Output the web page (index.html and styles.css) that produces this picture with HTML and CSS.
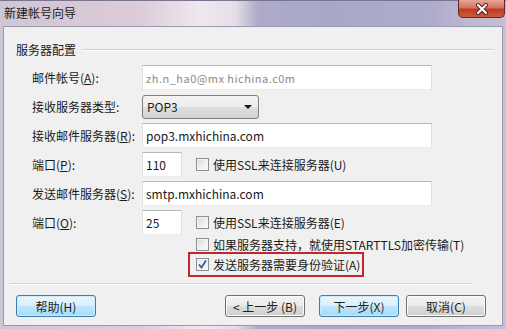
FILE: index.html
```html
<!DOCTYPE html>
<html lang="zh-CN">
<head>
<meta charset="utf-8">
<title>新建帐号向导</title>
<link rel="stylesheet" href="styles.css">
</head>
<body>
<div class="window">
  <div class="titlebar">
    <span class="title">新建帐号向导</span>
    <div class="close">
      <svg width="14" height="12" viewBox="0 0 14 12">
        <path d="M3 2 L11 10 M11 2 L3 10" stroke="#4a2020" stroke-width="4" stroke-linecap="round"/>
        <path d="M3 2 L11 10 M11 2 L3 10" stroke="#ffffff" stroke-width="2.2" stroke-linecap="round"/>
      </svg>
    </div>
  </div>
  <div class="client">
    <div class="group-head"><span class="group-title">服务器配置</span><span class="rule"></span></div>
    <div class="form">
      <div class="row">
        <span class="lbl">邮件帐号(<u>A</u>):</span>
        <div class="input wide"><span class="blur">zh.n_ha0@mx hichina.c0m</span></div>
      </div>
      <div class="row">
        <span class="lbl">接收服务器类型:</span>
        <div class="select"><span>POP3</span><span class="arrow"></span></div>
      </div>
      <div class="row">
        <span class="lbl">接收邮件服务器(<u>R</u>):</span>
        <div class="input wide"><span>pop3.mxhichina.com</span></div>
      </div>
      <div class="row">
        <span class="lbl">端口(<u>P</u>):</span>
        <div class="input port"><span>110</span></div>
        <span class="check"><span class="box"></span><span>使用SSL来连接服务器(U)</span></span>
      </div>
      <div class="row">
        <span class="lbl">发送邮件服务器(<u>S</u>):</span>
        <div class="input wide"><span>smtp.mxhichina.com</span></div>
      </div>
      <div class="row">
        <span class="lbl">端口(<u>O</u>):</span>
        <div class="input port"><span>25</span></div>
        <span class="check"><span class="box"></span><span>使用SSL来连接服务器(E)</span></span>
      </div>
      <div class="row-sub">
        <span class="check"><span class="box"></span><span>如果服务器支持，就使用STARTTLS加密传输(T)</span></span>
      </div>
      <div class="row-hl">
        <span class="check"><span class="box checked"><svg width="11" height="11" viewBox="0 0 11 11"><path d="M2 5.5 L4.5 8.5 L9 1.5" fill="none" stroke="#3d5a9e" stroke-width="1.8"/></svg></span><span>发送服务器需要身份验证(A)</span></span>
      </div>
    </div>
    <div class="sep"></div>
    <div class="buttons">
      <button class="btn blue">帮助(H)</button>
      <span class="spacer"></span>
      <button class="btn">&lt; 上一步 (B)</button>
      <button class="btn blue next">下一步(X)</button>
      <button class="btn cancel">取消(C)</button>
    </div>
  </div>
</div>
</body>
</html>
```

FILE: styles.css
```css
* { box-sizing: border-box; }
html, body { margin: 0; padding: 0; }
body {
  width: 506px;
  height: 329px;
  overflow: hidden;
  font-family: "Noto Sans CJK SC", "Noto Sans", sans-serif;
  font-size: 12px;
  color: #1a1a1a;
}
.window {
  width: 506px;
  height: 329px;
  display: flex;
  flex-direction: column;
  background: linear-gradient(90deg, #cfc6d4 0px, #d6c8d6 60px, #dccbd9 140px, #efe8ef 200px, #e6dde8 235px, #aeabc9 258px, #a7a7c8 330px, #aeaccb 430px, #bdb8d3 470px, #c4c0d8 506px);
}
.titlebar {
  height: 26px;
  display: flex;
  align-items: flex-start;
  border-top: 1px solid #7a7690;
}
.title {
  margin: 4px 0 0 4px;
  line-height: 16px;
  color: #1a1a1a;
}
.close {
  margin-left: auto;
  margin-right: 1px;
  margin-top: -1px;
  width: 47px;
  height: 18px;
  border: 1px solid #5a2a2a;
  border-top: none;
  border-radius: 0 0 5px 5px;
  background: linear-gradient(180deg, #e6a698 0%, #d7725f 45%, #c23a22 55%, #cf5a3a 100%);
  display: flex;
  align-items: center;
  justify-content: center;
}
.client {
  margin: 0 3px;
  height: 300px;
  border: 1px solid #9a98ac;
  background: #f0f0f0;
  display: flex;
  flex-direction: column;
}
.group-head {
  margin: 16px 8px 0 12px;
  height: 14px;
  display: flex;
  align-items: center;
}
.group-title { line-height: 14px; }
.rule {
  flex: 1;
  margin-left: 6px;
  border-top: 1px solid #cfcfcf;
  border-bottom: 1px solid #ffffff;
}
.form {
  margin: 8px 0 0 28px;
  display: flex;
  flex-direction: column;
}
.row {
  display: flex;
  align-items: center;
  height: 25px;
  margin-bottom: 4px;
}
.row:nth-child(6) { margin-bottom: 0; }
.lbl {
  width: 110px;
  flex: none;
}
u { text-decoration: underline; text-underline-offset: 1px; }
.input {
  height: 25px;
  background: #ffffff;
  border: 1px solid;
  border-color: #b8b8b8 #e0e0e0 #ebebeb #e0e0e0;
  display: flex;
  align-items: center;
  padding-left: 3px;
  overflow: hidden;
  white-space: nowrap;
}
.wide { width: 290px; }
.port { width: 40px; }
.blur {
  color: #8a8a8a;
  font-size: 11px;
  letter-spacing: 0.5px;
}
.select {
  width: 117px;
  height: 24px;
  border: 1px solid #7f7f7f;
  border-radius: 3px;
  background: linear-gradient(180deg, #f4f4f4 0%, #ececec 48%, #dddddd 52%, #d3d3d3 100%);
  display: flex;
  align-items: center;
  padding: 0 6px 0 4px;
}
.arrow {
  margin-left: auto;
  width: 0;
  height: 0;
  border-left: 4px solid transparent;
  border-right: 4px solid transparent;
  border-top: 4px solid #1a1a1a;
}
.check {
  display: flex;
  align-items: center;
  gap: 4px;
  white-space: nowrap;
}
.row .check { margin-left: 14px; }
.box {
  width: 13px;
  height: 13px;
  flex: none;
  border: 1px solid #8e8f8f;
  background: linear-gradient(135deg, #d9d9d9 0%, #f0f0f0 60%, #fbfbfb 100%);
  box-shadow: inset 0 0 0 1px #f4f4f4;
  display: flex;
  align-items: center;
  justify-content: center;
}
.box.checked {
  background: linear-gradient(135deg, #e6ecf5 0%, #f6f8fb 100%);
}
.row-sub {
  height: 15px;
  margin: 2px 0 0 164px;
  display: flex;
  align-items: center;
}
.row-hl {
  height: 25px;
  width: 176px;
  margin-left: 156px;
  border: 2px solid #c1272d;
  display: flex;
  align-items: center;
  padding-left: 6px;
}
.sep {
  margin: 6px 0 0 6px;
  width: 462px;
  border-top: 1px solid #d2d2d2;
  border-bottom: 1px solid #ffffff;
}
.buttons {
  margin: 10px 16px 0 12px;
  display: flex;
  align-items: center;
  height: 22px;
}
.spacer { flex: 1; }
.btn {
  width: 80px;
  height: 22px;
  padding: 0;
  font-family: inherit;
  font-size: 12px;
  color: #1e1e1e;
  border: 1px solid #707070;
  border-radius: 3px;
  background: linear-gradient(180deg, #f2f2f2 0%, #ebebeb 48%, #dddddd 52%, #cfcfcf 100%);
  box-shadow: inset 0 0 0 1px #fbfbfb;
}
.btn.blue {
  border-color: #3c7fb1;
  background: linear-gradient(180deg, #eaf6fd 0%, #d9f0fc 48%, #bee6fd 52%, #a7d9f5 100%);
  box-shadow: inset 0 0 0 1px #cdeaf8;
}
.next { margin-left: 14px; }
.cancel { margin-left: 7px; }
```
